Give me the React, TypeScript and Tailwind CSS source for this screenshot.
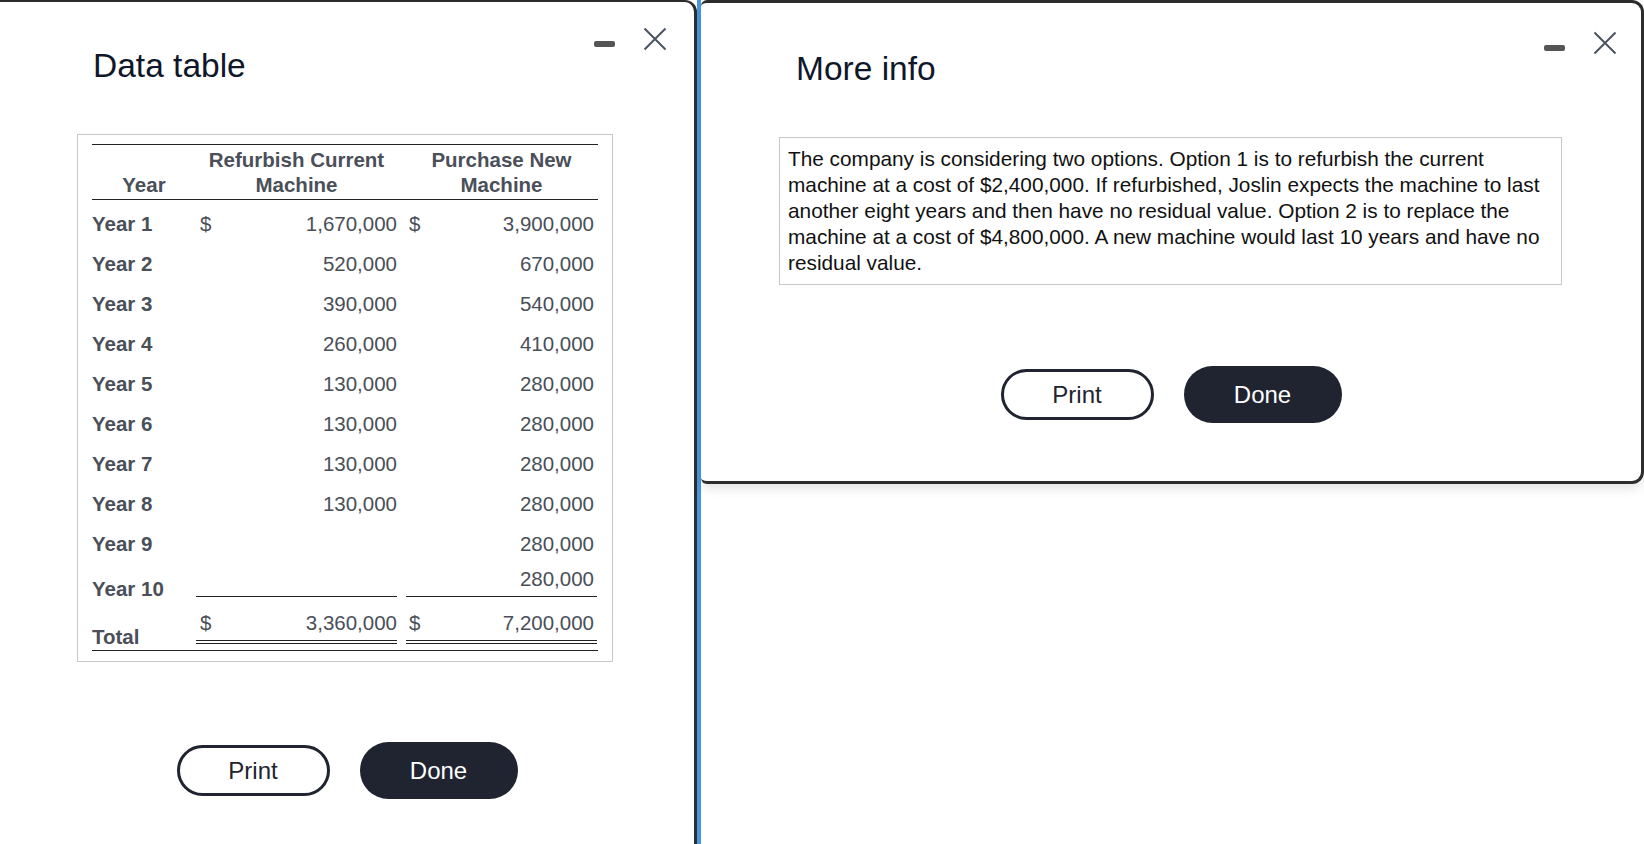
import React from 'react';

const rows = [
  { label: 'Year 1', a: '1,670,000', b: '3,900,000', dollar: true },
  { label: 'Year 2', a: '520,000', b: '670,000' },
  { label: 'Year 3', a: '390,000', b: '540,000' },
  { label: 'Year 4', a: '260,000', b: '410,000' },
  { label: 'Year 5', a: '130,000', b: '280,000' },
  { label: 'Year 6', a: '130,000', b: '280,000' },
  { label: 'Year 7', a: '130,000', b: '280,000' },
  { label: 'Year 8', a: '130,000', b: '280,000' },
  { label: 'Year 9', a: '', b: '280,000' },
];

function WindowControls({ className = '' }: { className?: string }) {
  return (
    <div className={`flex items-start gap-[28px] ${className}`}>
      <span className="mt-[14px] block h-[6px] w-[21px] rounded-[2px] bg-[#555]" />
      <svg width="24" height="24" viewBox="0 0 24 24" fill="none" stroke="#4b5260" strokeWidth="2">
        <path d="M1.5 1.5L22.5 22.5M22.5 1.5L1.5 22.5" />
      </svg>
    </div>
  );
}

function Buttons({ className = '' }: { className?: string }) {
  return (
    <div className={`flex items-center justify-center gap-[30px] ${className}`}>
      <button className="h-[51px] w-[153px] rounded-full border-[3px] border-[#1f2430] text-[24px] text-[#1f2430]">
        Print
      </button>
      <button className="h-[57px] w-[158px] rounded-full bg-[#1f2430] text-[24px] text-white">
        Done
      </button>
    </div>
  );
}

function DataTable() {
  return (
    <div className="ml-[77px] mt-[48px] w-[536px] border border-[#c8c8c8] px-[14px] pt-[9px] pb-[10px]">
      <div className="border-y border-[#222] text-[20.5px] leading-[24px] text-[#4a4f59]">
        {/* Header */}
        <div className="flex h-[55px] items-end border-b border-[#222] pb-[2px] font-bold leading-[25px]">
          <div className="w-[104px] text-center">Year</div>
          <div className="w-[201px] text-center">
            Refurbish Current
            <br />
            Machine
          </div>
          <div className="w-[9px]" />
          <div className="w-[191px] text-center">
            Purchase New
            <br />
            Machine
          </div>
        </div>

        <div className="pt-[4px]">
          {rows.map((r) => (
            <div key={r.label} className="flex h-[40px] items-center">
              <div className="w-[104px] font-bold">{r.label}</div>
              <div className="flex w-[201px] justify-between pl-[4px]">
                <span>{r.dollar ? '$' : ''}</span>
                <span>{r.a}</span>
              </div>
              <div className="w-[9px]" />
              <div className="flex w-[191px] justify-between pl-[3px] pr-[3px]">
                <span>{r.dollar ? '$' : ''}</span>
                <span>{r.b}</span>
              </div>
            </div>
          ))}

          {/* Year 10 */}
          <div className="flex h-[37px] items-start">
            <div className="w-[104px] self-end font-bold">Year 10</div>
            <div className="h-[33px] w-[201px] border-b border-[#222]" />
            <div className="w-[9px]" />
            <div className="flex h-[33px] w-[191px] justify-end border-b border-[#222] pt-[3px] pr-[3px]">
              280,000
            </div>
          </div>

          {/* Total */}
          <div className="flex h-[49px] items-start">
            <div className="w-[104px] self-end pb-[1px] font-bold">Total</div>
            <div className="flex h-[43px] w-[201px] justify-between border-b-4 border-double border-[#222] pt-[10px] pl-[4px]">
              <span>$</span>
              <span>3,360,000</span>
            </div>
            <div className="w-[9px]" />
            <div className="flex h-[43px] w-[191px] justify-between border-b-4 border-double border-[#222] pt-[10px] pl-[3px] pr-[3px]">
              <span>$</span>
              <span>7,200,000</span>
            </div>
          </div>
        </div>
      </div>
    </div>
  );
}

export default function App() {
  return (
    <div className="flex h-[844px] w-[1644px] overflow-hidden bg-white font-['Liberation_Sans',Arial,sans-serif]">
      {/* Left: Data table window */}
      <section className="flex w-[697px] shrink-0 flex-col rounded-tr-[12px] border-t-2 border-r-[3px] border-[#2d2d2d]">
        <header className="flex items-start justify-between pl-[93px] pr-[27px]">
          <h2 className="mt-[44px] text-[33.5px] leading-[40px] text-[#0f172a]">Data table</h2>
          <WindowControls className="mt-[25px]" />
        </header>
        <DataTable />
        <Buttons className="mt-[80px]" />
      </section>

      {/* focus strip */}
      <div className="w-[4px] shrink-0 bg-[#4597e0]" />

      {/* Right: More info window */}
      <div className="flex-1">
        <section className="h-[484px] rounded-tl-[6px] rounded-tr-[12px] rounded-br-[12px] rounded-bl-[6px] border-y-[3px] border-r-[3px] border-[#2d2d2d] bg-white shadow-[0_6px_12px_-2px_rgba(0,0,0,0.12)]">
          <header className="flex items-start justify-between pl-[95px] pr-[24px]">
            <h2 className="mt-[46px] text-[33.5px] leading-[40px] text-[#0f172a]">More info</h2>
            <WindowControls className="mt-[28px]" />
          </header>
          <div className="ml-[78px] mt-[48px] w-[783px] whitespace-nowrap border border-[#c8c8c8] px-[8px] py-[8px] text-[20.8px] leading-[26px] text-[#111]">
            The company is considering two options. Option 1 is to refurbish the current
            <br />
            machine at a cost of $2,400,000. If refurbished, Joslin expects the machine to last
            <br />
            another eight years and then have no residual value. Option 2 is to replace the
            <br />
            machine at a cost of $4,800,000. A new machine would last 10 years and have no
            <br />
            residual value.
          </div>
          <Buttons className="mt-[81px]" />
        </section>
      </div>
    </div>
  );
}
